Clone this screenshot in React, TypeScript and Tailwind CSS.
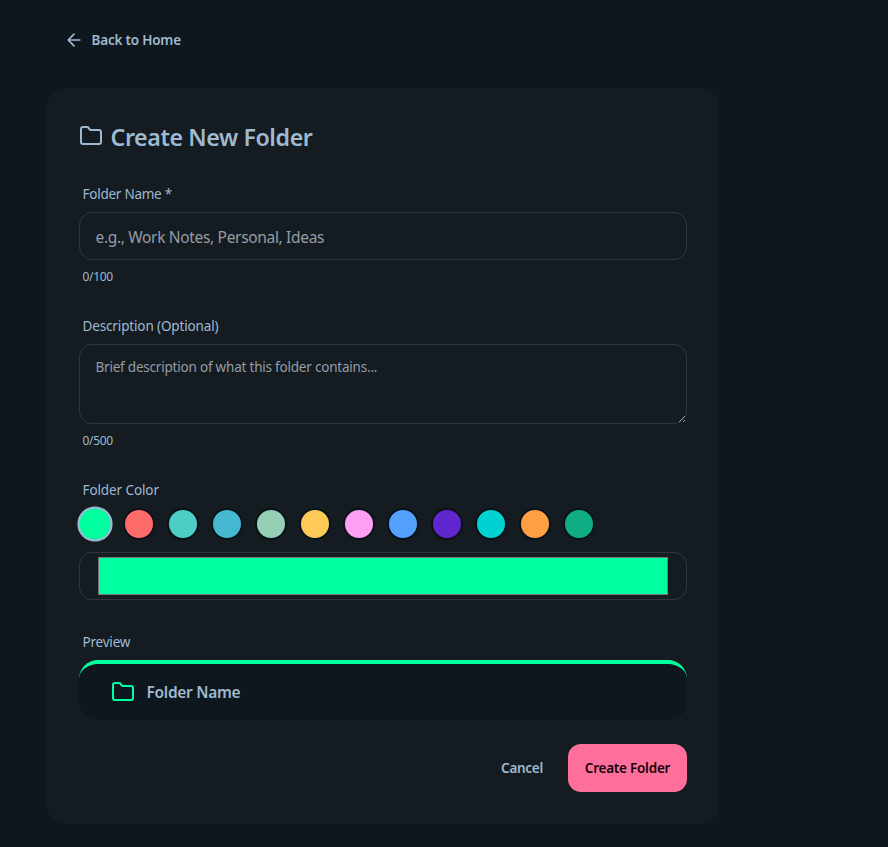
import { useState } from "react";

const COLORS = [
  "#00ff9f", "#ff6b6b", "#4ecdc4", "#45b7d1", "#96ceb4", "#feca57",
  "#ff9ff3", "#54a0ff", "#5f27cd", "#00d2d3", "#ff9f43", "#10ac84",
];

const FONT = "font-['Segoe_UI','Noto_Sans',sans-serif]";

function FolderIcon({ className }: { className: string }) {
  return (
    <svg viewBox="0 0 24 24" fill="none" stroke="currentColor" strokeWidth={2} strokeLinecap="round" strokeLinejoin="round" className={className}>
      <path d="M20 20a2 2 0 0 0 2-2V8a2 2 0 0 0-2-2h-7.9a2 2 0 0 1-1.69-.9L9.6 3.9A2 2 0 0 0 7.93 3H4a2 2 0 0 0-2 2v13a2 2 0 0 0 2 2Z" />
    </svg>
  );
}

function Label({ text, className }: { text: string; className: string }) {
  return (
    <div className="flex h-9 items-center px-[3.5px] text-[13.5px] leading-5">
      <span className={className}>{text}</span>
    </div>
  );
}

function Counter({ text }: { text: string }) {
  return (
    <div className="flex h-8 items-center px-[3.5px] pt-0.5 text-xs leading-4">
      <span className="tracking-[-0.3px]">{text}</span>
    </div>
  );
}

export default function App() {
  const [color, setColor] = useState(COLORS[0]);
  return (
    <div className={`h-[847px] overflow-hidden bg-[#0e171e] pl-[47px] pt-4 text-[#9fb9d0] ${FONT}`}>
      <button className="flex h-12 items-center gap-[7.5px] px-[17px] text-[13.5px] font-semibold">
        <svg viewBox="0 0 24 24" fill="none" stroke="currentColor" strokeWidth={2} strokeLinecap="round" strokeLinejoin="round" className="size-5">
          <path d="M19 12H5M12 19l-7-7 7-7" />
        </svg>
        <span className="tracking-[-0.2px]">Back to Home</span>
      </button>

      <main className="mt-6 h-[736px] w-[672px] rounded-[19px] bg-[#141c22] p-8">
        <h1 className="flex h-9 items-center gap-[7.5px] text-[23.2px] font-semibold">
          <FolderIcon className="mb-1 size-6" />
          <span className="pb-px tracking-[-0.4px]">Create New Folder</span>
        </h1>

        <div className="mt-5">
          <Label text="Folder Name *" className="tracking-[-0.25px]" />
          <input
            placeholder="e.g., Work Notes, Personal, Ideas"
            className="block h-12 w-full rounded-[13px] border border-[#2c373f] bg-transparent px-[15.5px] pt-0.5 text-[15.5px] tracking-[-0.33px] outline-none placeholder:text-[#949ca5]"
          />
          <Counter text="0/100" />
        </div>

        <div className="mt-4">
          <Label text="Description (Optional)" className="tracking-[-0.14px]" />
          <textarea
            placeholder="Brief description of what this folder contains..."
            className="block h-20 w-full rounded-[13px] border border-[#2c373f] bg-transparent px-[15.5px] py-2 text-[13.5px] leading-7 tracking-[-0.21px] outline-none placeholder:text-[#949ca5]"
          />
          <Counter text="0/500" />
        </div>

        <div className="mt-4">
          <Label text="Folder Color" className="tracking-[-0.1px]" />
          <div className="flex gap-3">
            {COLORS.map((c) => (
              <button
                key={c}
                onClick={() => setColor(c)}
                className={`size-8 rounded-full border-2 ${c === color ? "scale-110 border-[#9fb9d0]" : "border-[#091319]"}`}
                style={{ backgroundColor: c }}
              />
            ))}
          </div>
          <div className="mt-3 h-12 rounded-[13px] border border-[#2c373f] px-[18px] py-1">
            <div className="h-[38px] border border-[#777777]" style={{ backgroundColor: color }} />
          </div>
        </div>

        <div className="mt-6">
          <Label text="Preview" className="tracking-[-0.2px]" />
          <div className="flex h-15 items-center gap-[11.5px] rounded-[19px] border-t-4 bg-[#0e171e] px-8" style={{ borderTopColor: color }}>
            <span style={{ color }}><FolderIcon className="size-6" /></span>
            <span className="pt-0.5 text-[15.5px] font-semibold tracking-[-0.3px]">Folder Name</span>
          </div>
        </div>

        <div className="mt-6 flex justify-end gap-2">
          <button className="h-12 px-[17px] text-[13.5px] font-semibold tracking-[-0.28px]">Cancel</button>
          <button className="h-12 w-[119px] rounded-[13px] bg-[#ff6f9c] text-[13.5px] font-semibold tracking-[-0.24px] text-[#160409]">Create Folder</button>
        </div>
      </main>
    </div>
  );
}
